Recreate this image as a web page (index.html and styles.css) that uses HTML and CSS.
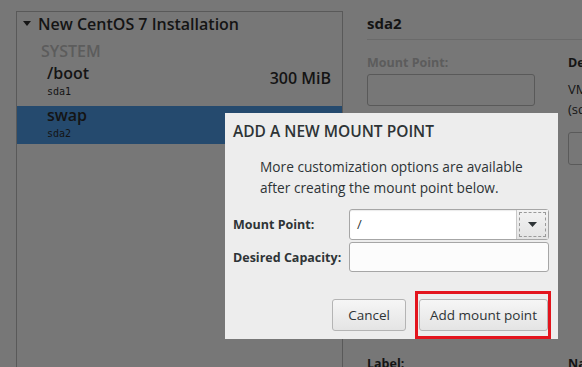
FILE: index.html
```html
<!DOCTYPE html>
<html lang="en">
<head>
    <meta charset="UTF-8">
    <title>Manual Partitioning</title>
    <link rel="stylesheet" href="styles.css">
</head>
<body>
    <div class="screen">
        <div class="tree">
            <div class="tree-head">
                <svg class="expander" width="8" height="5" viewBox="0 0 8 5"><path d="M0 0h8L4 5z" fill="#161616"/></svg>
                <span>New CentOS 7 Installation</span>
            </div>
            <div class="group">SYSTEM</div>
            <div class="part">
                <div class="part-info">
                    <div class="part-name">/boot</div>
                    <div class="part-dev">sda1</div>
                </div>
                <div class="part-size">300 MiB</div>
            </div>
            <div class="part selected">
                <div class="part-info">
                    <div class="part-name">swap</div>
                    <div class="part-dev">sda2</div>
                </div>
            </div>
        </div>

        <div class="details">
            <div class="details-title">sda2</div>
            <div class="details-row">
                <div class="col-mount">
                    <div class="field-label dim">Mount Point:</div>
                    <div class="field-box"></div>
                </div>
                <div class="col-device">
                    <div class="field-label">Device(s):</div>
                    <div class="device-text">VMware Virtual disk<br>(sda)</div>
                    <div class="modify-btn"></div>
                </div>
            </div>
            <div class="details-row details-bottom">
                <div class="col-mount field-label">Label:</div>
                <div class="field-label">Name:</div>
            </div>
        </div>
    </div>

    <div class="dialog">
        <h2 class="dialog-title">ADD A NEW MOUNT POINT</h2>
        <p class="dialog-text">More customization options are available<br>after creating the mount point below.</p>
        <div class="form">
            <div class="form-row">
                <label>Mount Point:</label>
                <div class="combo">
                    <div class="combo-entry">/</div>
                    <div class="combo-btn"><span class="focus-ring"><svg width="9" height="5" viewBox="0 0 9 5"><path d="M0 0h9L4.5 5z" fill="#2e3436"/></svg></span></div>
                </div>
            </div>
            <div class="form-row">
                <label>Desired Capacity:</label>
                <div class="entry"></div>
            </div>
        </div>
        <div class="actions">
            <button class="btn btn-cancel">Cancel</button>
            <button class="btn btn-add">Add mount point</button>
        </div>
        <div class="highlight"></div>
    </div>
</body>
</html>
```

FILE: styles.css
```css
body {
    margin: 0;
    width: 582px;
    height: 367px;
    overflow: hidden;
    position: relative;
    background: #777777;
    font-family: 'Open Sans', 'DejaVu Sans', sans-serif;
    color: #141414;
}

.screen {
    display: flex;
    padding: 11px 0 0 16px;
    height: 356px;
}

/* left partition tree */
.tree {
    box-sizing: border-box;
    width: 327px;
    height: 360px;
    border: 1px solid #595959;
    border-bottom: none;
    flex-shrink: 0;
}

.tree-head {
    display: flex;
    align-items: center;
    height: 23px;
    padding-left: 6px;
    font-size: 16px;
    font-weight: 600;
}

.expander {
    margin-right: 7px;
}

.group {
    padding-left: 24px;
    margin-top: 7px;
    font-size: 16px;
    font-weight: 600;
    color: #5c5c5c;
    line-height: 18px;
}

.part {
    display: flex;
    justify-content: space-between;
    align-items: center;
    padding: 0 11px 4px 30px;
    margin-top: 4px;
}

.part-name {
    font-size: 16px;
    font-weight: 600;
    line-height: 19px;
}

.part-dev {
    font-family: 'DejaVu Sans Mono', monospace;
    font-size: 10px;
    line-height: 12px;
    margin-top: 3px;
}

.part-size {
    font-size: 16px;
    font-weight: 600;
    margin-bottom: 6px;
}

.selected {
    background: #254a6e;
}

/* right details pane */
.details {
    margin-left: 24px;
    flex: 1;
}

.details-title {
    font-size: 15px;
    font-weight: 700;
    line-height: 18px;
    padding: 3px 0 7px;
    border-bottom: 1px solid #6a6a6a;
}

.details-row {
    display: flex;
    gap: 33px;
    margin-top: 14px;
    white-space: nowrap;
}

.col-mount {
    width: 168px;
    flex-shrink: 0;
}

.field-label {
    font-size: 12.5px;
    font-weight: 700;
    line-height: 17px;
}

.dim {
    color: #5c5c5c;
}

.field-box {
    box-sizing: border-box;
    height: 32px;
    margin-top: 3px;
    border: 1px solid #595959;
    border-radius: 3px;
}

.device-text {
    font-size: 13px;
    line-height: 20px;
    margin-top: 8px;
}

.modify-btn {
    width: 60px;
    height: 31px;
    margin-top: 13px;
    border: 1px solid #5a5a5a;
    border-radius: 3px;
}

.details-bottom {
    margin-top: 190px;
}

/* modal dialog */
.dialog {
    position: absolute;
    left: 225px;
    top: 113px;
    box-sizing: border-box;
    width: 333px;
    height: 226px;
    padding: 8px 9px 0 8px;
    background: #ededed;
    color: #2e3436;
}

.dialog-title {
    margin: 0;
    font-size: 15.5px;
    font-weight: 600;
    line-height: 20px;
}

.dialog-text {
    margin: 15px 0 0 27px;
    font-size: 13.7px;
    line-height: 21px;
}

.form {
    margin-top: 11px;
}

.form-row {
    display: flex;
    align-items: center;
    margin-bottom: 2px;
}

.form-row label {
    width: 116px;
    font-size: 12.5px;
    font-weight: 700;
}

.combo {
    display: flex;
    width: 200px;
    height: 31px;
    box-sizing: border-box;
    border: 1px solid #a6a6a6;
    border-radius: 3px;
    background: #fff;
    box-shadow: inset 0 1px 1px rgba(0, 0, 0, 0.08);
}

.combo-entry {
    flex: 1;
    padding-left: 7px;
    font-size: 13px;
    line-height: 29px;
}

.combo-btn {
    width: 32px;
    border-left: 1px solid #c8c8c8;
    background: linear-gradient(#f3f3f3, #e3e3e3);
    display: flex;
    padding: 2px;
    box-sizing: border-box;
}

.focus-ring {
    flex: 1;
    border: 1px dashed #9a9a9a;
    display: flex;
    align-items: center;
    justify-content: center;
}

.entry {
    box-sizing: border-box;
    width: 200px;
    height: 30px;
    border: 1px solid #a6a6a6;
    border-radius: 3px;
    background: #fcfcfc;
}

.actions {
    display: flex;
    justify-content: flex-end;
    gap: 13px;
    margin: 27px 1px 0 0;
}

.btn {
    height: 32px;
    padding: 0;
    border: 1px solid #b4b4b4;
    border-radius: 3px;
    background: linear-gradient(#f6f6f6, #e4e4e4);
    font-family: inherit;
    font-size: 13.5px;
    color: #2e3436;
    white-space: nowrap;
}

.btn-cancel {
    width: 74px;
}

.btn-add {
    width: 129px;
}

.highlight {
    position: absolute;
    left: 190px;
    top: 178px;
    width: 130px;
    height: 42px;
    border: 3px solid #e3141d;
}
```
